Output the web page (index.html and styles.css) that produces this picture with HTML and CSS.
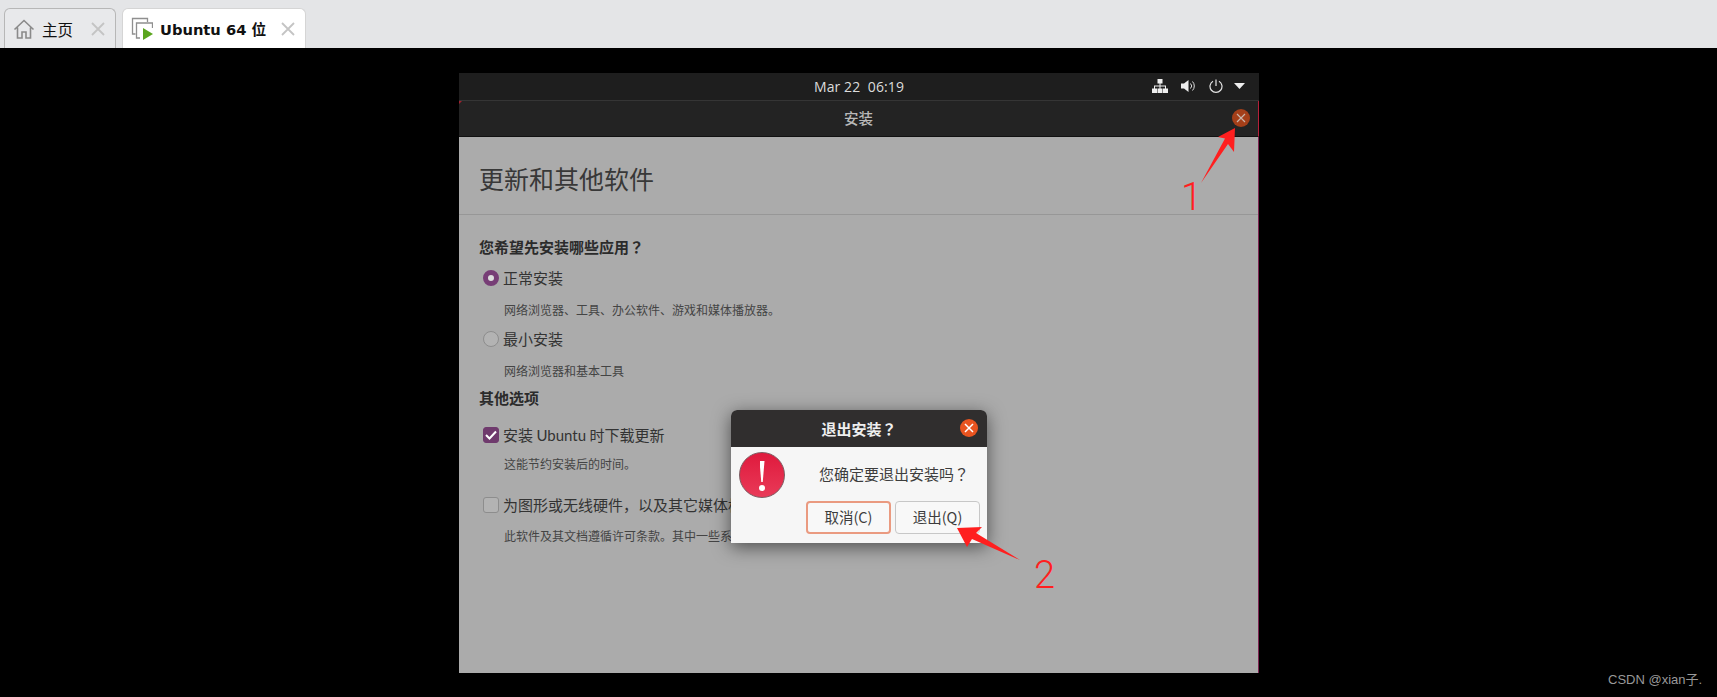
FILE: index.html
```html
<!DOCTYPE html>
<html lang="zh">
<head>
<meta charset="utf-8">
<title>Ubuntu 64 位</title>
<link rel="stylesheet" href="styles.css">
</head>
<body>
<header class="tabstrip">
  <div class="tab tab-home">
    <svg class="tab-icon" width="22" height="22" viewBox="0 0 22 22" fill="none" stroke="#8a8a8a" stroke-width="1.6"><path d="M1.5 11.5 11 2.5l9.500 9M4.500 9.500V20H9v-6h4v6h4.500V9.500"/></svg>
    <span class="tab-label">主页</span>
    <svg class="tab-x" width="14" height="14" viewBox="0 0 14 14" stroke="#c4c4c4" stroke-width="1.8"><path d="M1 1l12 12M13 1 1 13"/></svg>
  </div>
  <div class="tab tab-vm">
    <svg class="tab-icon" width="22" height="24" viewBox="0 0 22 24" fill="none" stroke="#8f8f8f" stroke-width="1.3"><path d="M4.500 17H1.500V1.500h15V5"/><path d="M9 21H5.500V6h16v5"/><path d="M12 11v12l10-6z" fill="#5aa51d" stroke="none"/></svg>
    <span class="tab-label tab-label-bold">Ubuntu 64 位</span>
    <svg class="tab-x" width="14" height="14" viewBox="0 0 14 14" stroke="#c4c4c4" stroke-width="1.800"><path d="M1 1l12 12M13 1 1 13"/></svg>
  </div>
</header>

<main class="stage">
  <section class="vm">
    <div class="topbar">
      <span class="clock">Mar 22  06:19</span>
      <div class="tray">
        <svg width="16" height="14" viewBox="0 0 16 14" fill="#eee"><path d="M5.500 0h5v4.500h-5zM0 9.500h5V14H0zM5.500 9.500h5V14h-5zM11 9.500h5V14h-5z"/><path d="M7.500 4h1v2.500h5.500v3.500h-1V7.500H8.500V10h-1V7.500H3V10H2V6.500h5.500z"/></svg>
        <svg width="15" height="14" viewBox="0 0 15 14" fill="none"><path d="M0 4.500h3L7.500 1v12L3 9.500H0z" fill="#eee"/><path d="M9.500 4.500a3.500 3.500 0 0 1 0 5M11.500 2.500a6.500 6.500 0 0 1 0 9" stroke="#ddd" stroke-width="1"/></svg>
        <svg width="14" height="14" viewBox="0 0 14 14" fill="none" stroke="#e4e4e4" stroke-width="1.200"><path d="M7 .5v6.500M4 2.200a6 6 0 1 0 6 0"/></svg>
        <svg class="caret" width="11" height="6" viewBox="0 0 11 6" fill="#eee"><path d="M0 0h11L5.500 6z"/></svg>
      </div>
    </div>
    <div class="titlebar">
      <span class="titlebar-text">安装</span>
      <span class="win-close">
        <svg width="10" height="10" viewBox="0 0 10 10" stroke="#c9b5ab" stroke-width="1.200"><path d="M1 1l8 8M9 1 1 9"/></svg>
      </span>
    </div>
    <div class="content">
      <h1 class="page-title">更新和其他软件</h1>
      <div class="form">
        <div class="row question q1">您希望先安装哪些应用<span class="fw" lang="ja">？</span></div>
        <div class="row option r1"><span class="radio radio-on"></span>正常安装</div>
        <div class="row sub s1">网络浏览器、工具、办公软件、游戏和媒体播放器。</div>
        <div class="row option r2"><span class="radio"></span>最小安装</div>
        <div class="row sub s1">网络浏览器和基本工具</div>
        <div class="row question q2">其他选项</div>
        <div class="row option c1"><span class="check check-on"><svg width="12" height="10" viewBox="0 0 12 10" fill="none" stroke="#fff" stroke-width="2"><path d="M1 5l3.500 3.500L11 1.500"/></svg></span><span class="option-text">安装 <span class="latin">Ubuntu</span> 时下载更新</span></div>
        <div class="row sub s2">这能节约安装后的时间。</div>
        <div class="row option c2"><span class="check"></span>为图形或无线硬件，以及其它媒体格式安装第三方软件</div>
        <div class="row sub s3">此软件及其文档遵循许可条款。其中一些系统专有软件</div>
      </div>
    </div>
  </section>

  <div class="dialog">
    <div class="dialog-title">
      <span>退出安装<span class="fw" lang="ja">？</span></span>
      <span class="dialog-close"><svg width="10" height="10" viewBox="0 0 10 10" stroke="#fff" stroke-width="1.500"><path d="M1 1l8 8M9 1 1 9"/></svg></span>
    </div>
    <div class="dialog-body">
      <div class="dialog-main">
        <span class="alert-icon"><span class="alert-bar"></span><span class="alert-dot"></span></span>
        <p class="dialog-text">您确定要退出安装吗<span class="fw" lang="ja">？</span></p>
      </div>
      <div class="dialog-actions">
        <span class="btn btn-focus">取消(C)</span>
        <span class="btn">退出(Q)</span>
      </div>
    </div>
  </div>

  <svg class="arrow arrow-one" width="44" height="64" viewBox="0 0 44 64" fill="#ff1f1f"><path d="M36 1 19 10l7 1.500L2 56 29 17l6 8z"/></svg>
  <span class="mark mark-one">1</span>
  <svg class="arrow arrow-two" width="66" height="36" viewBox="0 0 66 36" fill="#ff1f1f"><path d="M1 1l10 19 5-8 48 21-44-27 6-6z"/></svg>
  <span class="mark mark-two">2</span>
  <span class="watermark">CSDN @xian子.</span>
</main>
</body>
</html>
```
FILE: styles.css
```css
* { box-sizing: border-box; }
html, body { margin: 0; height: 100%; overflow: hidden; }
body { background: #000; font-family: "Noto Sans CJK SC", sans-serif; }
.fw { font-family: "Noto Sans CJK JP", sans-serif; }
.latin { font-family: Lato, sans-serif; }

.tabstrip {
  height: 48px;
  background: #e4e5e7;
  display: flex;
  align-items: flex-end;
  gap: 6px;
  padding-left: 4px;
}
.tab {
  height: 40px;
  display: flex;
  align-items: center;
  border: 1px solid #b7b7b7;
  border-bottom: 0;
  border-radius: 6px 6px 0 0;
  position: relative;
}
.tab-home { width: 112px; background: #e8e9eb; padding-left: 8px; }
.tab-vm { width: 184px; background: #fff; border-color: #d5d5d5; padding-left: 8px; }
.tab-icon { flex: none; }
.tab-label { font-size: 15px; color: #111; margin-left: 7px; white-space: nowrap; font-family: "Noto Sans CJK SC", sans-serif; }
.tab-home .tab-label { font-size: 15.500px; }
.tab-label-bold { font-family: "DejaVu Sans", "Noto Sans CJK SC", sans-serif; font-weight: 700; font-size: 14.700px; margin-left: 7px; }
.tab-x { margin-left: auto; margin-right: 10px; }

.stage { position: relative; height: 649px; padding: 25px 0 0 459px; }
.vm { width: 800px; height: 600px; display: flex; flex-direction: column; background: #ababab; }

.topbar {
  height: 28px;
  background: #1e1e1e;
  border-bottom: 1px solid #353535;
  position: relative;
  display: flex;
  align-items: center;
  justify-content: center;
}
.clock { font-family: "Open Sans", sans-serif; font-size: 14px; letter-spacing: .1px; color: #dcdcdc; white-space: pre; }
.tray {
  position: absolute;
  right: 14px;
  top: 6px;
  display: flex;
  align-items: center;
  gap: 13px;
}
.caret { margin-left: -2px; }

.titlebar {
  height: 36px;
  padding-bottom: 2px;
  background: #232323;
  border-bottom: 1px solid #111;
  border-right: 1px solid #b3203a;
  position: relative;
  display: flex;
  align-items: center;
  justify-content: center;
}
.titlebar::before {
  content: "";
  position: absolute;
  left: 0;
  top: 0;
  border-top: 3px solid #a3202f;
  border-right: 3px solid transparent;
}
.titlebar-text { font-size: 14.500px; font-weight: 500; color: #b9b9b9; }
.win-close {
  position: absolute;
  right: 8px;
  top: 8px;
  width: 18px;
  height: 18px;
  border-radius: 50%;
  background: #a43f19;
  display: flex;
  align-items: center;
  justify-content: center;
}

.content { flex: 1; border-right: 1px solid #7c2350; overflow: hidden; }
.page-title {
  margin: 0;
  height: 78px;
  padding: 21px 0 0 20px;
  font-size: 25px;
  line-height: 40px;
  font-weight: 400;
  color: #383838;
  border-bottom: 1px solid #979797;
}
.form { padding-left: 18px; }
.row { height: 20px; line-height: 20px; white-space: nowrap; }
.question { font-size: 15px; font-weight: 700; color: #2b2b2b; padding-left: 2px; }
.option { display: flex; align-items: center; font-size: 15px; color: #333; padding-left: 6px; }
.option-text { white-space: pre; }
.sub { font-size: 12px; color: #444; padding-left: 27px; }

.q1 { margin-top: 22px; }
.r1 { margin-top: 11px; }
.s1 { margin-top: 12px; }
.r2 { margin-top: 9px; }
.q2 { margin-top: 7px; }
.c1 { margin-top: 17px; }
.s2 { margin-top: 9px; }
.c2 { margin-top: 21px; }
.s3 { margin-top: 11px; }

.radio {
  flex: none;
  width: 16px;
  height: 16px;
  border-radius: 50%;
  border: 1px solid #8d8d8d;
  background: #b3b3b3;
  margin-right: 4px;
}
.radio-on { border: 5px solid #773d76; background: #ddd; }
.check {
  flex: none;
  width: 16px;
  height: 16px;
  border-radius: 3px;
  border: 1px solid #8d8d8d;
  background: #b3b3b3;
  margin-right: 4px;
  display: flex;
  align-items: center;
  justify-content: center;
}
.check-on { background: #6f3a6d; border-color: #6f3a6d; }

.dialog {
  position: absolute;
  left: 731px;
  top: 362px;
  width: 256px;
  height: 133px;
  border-radius: 6px 6px 0 0;
  overflow: hidden;
  box-shadow: 0 4px 18px rgba(0, 0, 0, .55);
  display: flex;
  flex-direction: column;
  background: #f6f6f6;
}
.dialog-title {
  height: 37px;
  flex: none;
  background: #302e2e;
  color: #eee;
  font-size: 15px;
  font-weight: 700;
  display: flex;
  align-items: center;
  justify-content: center;
  position: relative;
}
.dialog-close {
  position: absolute;
  right: 9px;
  top: 9px;
  width: 18px;
  height: 18px;
  border-radius: 50%;
  background: #e95420;
  display: flex;
  align-items: center;
  justify-content: center;
}
.dialog-body { flex: 1; display: flex; flex-direction: column; padding: 5px 7px 0 8px; }
.dialog-main { display: flex; align-items: flex-start; }
.alert-icon {
  flex: none;
  width: 46px;
  height: 46px;
  border-radius: 50%;
  background: linear-gradient(#df1a3d, #e93a58);
  border: 1px solid #7d5a60;
  display: flex;
  flex-direction: column;
  align-items: center;
  padding-top: 8px;
}
.alert-bar { width: 5px; height: 21px; background: #fff; clip-path: polygon(0 0, 100% 0, 65% 100%, 35% 100%); }
.alert-dot { width: 6px; height: 6px; border-radius: 50%; background: #fff; margin-top: 3px; }
.dialog-text { margin: 0 0 0 34px; padding-top: 12px; font-size: 15px; line-height: 20px; color: #3d3d3d; white-space: nowrap; }
.dialog-actions { display: flex; justify-content: flex-end; gap: 4px; margin-top: 3px; }
.btn {
  width: 85px;
  height: 33px;
  border: 1px solid #c7c7c7;
  border-radius: 4px;
  background: #f8f8f8;
  font-size: 14.500px;
  line-height: 30px;
  text-align: center;
  color: #3d3d3d;
}
.btn-focus { border: 2px solid #ea9a80; line-height: 28px; }

.arrow { position: absolute; }
.arrow-one { left: 1199px; top: 79px; }
.arrow-two { left: 956px; top: 479px; }
.mark { position: absolute; color: #ff1f1f; font-family: Roboto, sans-serif; font-size: 38px; line-height: 40px; font-weight: 300; }
.mark-one { left: 1181px; top: 129px; }
.mark-two { left: 1034px; top: 507px; }
.watermark { position: absolute; left: 1608px; top: 623px; font-family: "Liberation Sans", "Noto Sans CJK SC", sans-serif; font-size: 13px; line-height: 18px; color: #999; }
```
